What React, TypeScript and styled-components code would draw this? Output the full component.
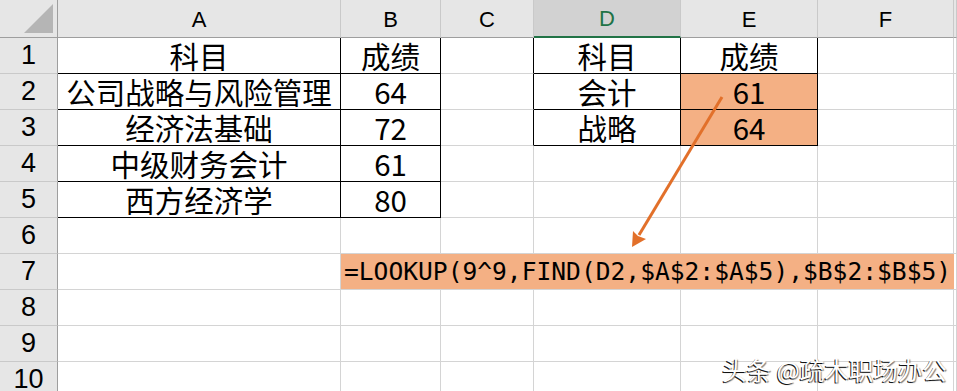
import React from "react";
import styled, { createGlobalStyle } from "styled-components";

const GlobalStyle = createGlobalStyle`
  html, body {
    margin: 0;
    padding: 0;
    background: #fff;
    overflow: hidden;
  }
`;

const COLS = ["A", "B", "C", "D", "E", "F", ""];
const COL_WIDTHS = "58px 283px 100px 93px 147px 137px 136px 1fr";

const Sheet = styled.div`
  position: relative;
  width: 957px;
  height: 391px;
  overflow: hidden;
  display: grid;
  grid-template-columns: ${COL_WIDTHS};
  grid-template-rows: 38px repeat(10, 36px);
  font-family: "Noto Sans CJK SC", "Liberation Sans", sans-serif;
  color: #000;
`;

const Corner = styled.div`
  background: #e6e6e6;
  border-right: 1px solid #9e9e9e;
  border-bottom: 1px solid #9e9e9e;
  box-sizing: border-box;
  display: flex;
  align-items: flex-end;
  justify-content: flex-end;
  padding: 0 4px 4px 0;
`;

const SelectAll = styled.div`
  width: 29px;
  height: 29px;
  background: #b5b5b5;
  clip-path: polygon(100% 0, 100% 100%, 0 100%);
`;

const ColHeader = styled.div<{ $active?: boolean }>`
  background: ${(p) => (p.$active ? "#d2d2d2" : "#e6e6e6")};
  color: ${(p) => (p.$active ? "#217346" : "#000")};
  border-right: 1px solid #c9c9c9;
  border-bottom: ${(p) => (p.$active ? "2px solid #217346" : "1px solid #9e9e9e")};
  box-sizing: border-box;
  display: flex;
  align-items: center;
  justify-content: center;
  font-family: "Liberation Sans", Arial, sans-serif;
  font-size: 22px;
  padding-top: 2px;
`;

const RowHeader = styled.div`
  background: #e6e6e6;
  border-right: 1px solid #9e9e9e;
  border-bottom: 1px solid #c9c9c9;
  box-sizing: border-box;
  display: flex;
  align-items: center;
  justify-content: center;
  font-family: "Liberation Sans", Arial, sans-serif;
  font-size: 27px;
  line-height: 1;
  overflow: hidden;
`;

const Cell = styled.div<{ $right?: boolean; $bottom?: boolean; $fill?: boolean }>`
  background: ${(p) => (p.$fill ? "#f4b084" : "#fff")};
  border-right: 1px solid ${(p) => (p.$right ? "#000" : "#d4d4d4")};
  border-bottom: 1px solid ${(p) => (p.$bottom ? "#000" : "#d4d4d4")};
  box-sizing: border-box;
  display: flex;
  align-items: center;
  justify-content: center;
  font-size: 29.5px;
  line-height: 1;
  white-space: nowrap;
`;

const FormulaCell = styled.div`
  grid-column: 3 / 8;
  background: #f4b084;
  border-bottom: 1px solid #d4d4d4;
  box-sizing: border-box;
  display: flex;
  align-items: center;
  padding-left: 3px;
  font-family: "DejaVu Sans Mono", "Liberation Mono", monospace;
  font-size: 24.6px;
  white-space: nowrap;
  overflow: visible;
`;

const Overlay = styled.svg`
  position: absolute;
  left: 0;
  top: 0;
  pointer-events: none;
`;

const Watermark = styled.div`
  position: absolute;
  left: 722px;
  top: 352px;
  font-family: "Noto Sans CJK SC", sans-serif;
  font-size: 24.5px;
  color: #fff;
  text-shadow: -1px 1px 0 rgba(0, 0, 0, 0.9), 1px 1px 1px rgba(0, 0, 0, 0.5);
  white-space: nowrap;
`;

type CellData = { text?: string; fill?: boolean };

// row number -> column letter -> content
const DATA: Record<number, Record<string, CellData>> = {
  1: { A: { text: "科目" }, B: { text: "成绩" }, D: { text: "科目" }, E: { text: "成绩" } },
  2: { A: { text: "公司战略与风险管理" }, B: { text: "64" }, D: { text: "会计" }, E: { text: "61", fill: true } },
  3: { A: { text: "经济法基础" }, B: { text: "72" }, D: { text: "战略" }, E: { text: "64", fill: true } },
  4: { A: { text: "中级财务会计" }, B: { text: "61" } },
  5: { A: { text: "西方经济学" }, B: { text: "80" } },
};

// black outline of the two tables
const hasRightEdge = (row: number, col: string) =>
  (row <= 5 && (col === "A" || col === "B")) ||
  (row <= 3 && (col === "C" || col === "D" || col === "E"));

const hasBottomEdge = (row: number, col: string) =>
  (row <= 5 && (col === "A" || col === "B")) ||
  (row <= 3 && (col === "D" || col === "E"));

const FORMULA = "=LOOKUP(9^9,FIND(D2,$A$2:$A$5),$B$2:$B$5)";

const App: React.FC = () => {
  const rows = Array.from({ length: 10 }, (_, i) => i + 1);

  return (
    <>
      <GlobalStyle />
      <Sheet>
        <Corner>
          <SelectAll />
        </Corner>
        {COLS.map((c, i) => (
          <ColHeader key={`h${i}`} $active={c === "D"}>
            {c}
          </ColHeader>
        ))}

        {rows.map((r) => (
          <React.Fragment key={r}>
            <RowHeader>{r}</RowHeader>
            {r === 7 ? (
              <>
                <Cell />
                <FormulaCell>{FORMULA}</FormulaCell>
                <Cell />
              </>
            ) : (
              COLS.map((c, i) => {
                const d = DATA[r]?.[c];
                return (
                  <Cell
                    key={`${r}-${i}`}
                    $right={hasRightEdge(r, c)}
                    $bottom={hasBottomEdge(r, c)}
                    $fill={d?.fill}
                  >
                    {d?.text}
                  </Cell>
                );
              })
            )}
          </React.Fragment>
        ))}

        <Overlay width={957} height={391} viewBox="0 0 957 391">
          <line x1={722} y1={97} x2={639} y2={235} stroke="#e2702a" strokeWidth={3} />
          <polygon points="632,247 633,231 638,236 646,239" fill="#e2702a" />
        </Overlay>
        <Watermark>头条 @疏木职场办公</Watermark>
      </Sheet>
    </>
  );
};

export default App;
